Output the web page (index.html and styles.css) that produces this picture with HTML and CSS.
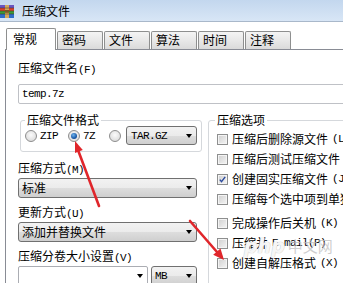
FILE: index.html
```html
<!DOCTYPE html>
<html lang="zh-CN">
<head>
    <meta charset="UTF-8">
    <meta name="viewport" content="width=device-width, initial-scale=1.0">
    <title>压缩文件</title>
    <link rel="stylesheet" href="styles.css">
</head>
<body>
    <div class="window">
        <div class="titlebar">
            <svg class="app-icon" viewBox="0 0 14 13">
                <rect x="0" y="0" width="14" height="3" fill="#6a55c0"/>
                <rect x="0" y="3" width="14" height="3" fill="#d8452c"/>
                <rect x="0" y="6" width="14" height="3" fill="#3d9a3a"/>
                <rect x="0" y="9" width="14" height="4" fill="#2f6ec8"/>
                <rect x="5" y="0" width="4" height="13" fill="#d2a85c"/>
                <rect x="5" y="5" width="4" height="3" fill="#8a6a2e"/>
                <line x1="0" y1="3" x2="14" y2="3" stroke="#3a2a1a" stroke-width="0.5"/>
                <line x1="0" y1="6" x2="14" y2="6" stroke="#3a2a1a" stroke-width="0.5"/>
                <line x1="0" y1="9" x2="14" y2="9" stroke="#3a2a1a" stroke-width="0.5"/>
            </svg>
            <span class="title">压缩文件</span>
        </div>

        <div class="dialog">
            <div class="tabs">
                <div class="tab active">常规</div>
                <div class="tab">密码</div>
                <div class="tab">文件</div>
                <div class="tab">算法</div>
                <div class="tab">时间</div>
                <div class="tab">注释</div>
            </div>

            <div class="panel">
                <div class="label">压缩文件名<span class="key">(F)</span></div>
                <div class="input mono">temp.7z</div>

                <div class="columns">
                    <div class="left">
                        <fieldset class="group format">
                            <legend>压缩文件格式</legend>
                            <div class="radios">
                                <label class="radio-item zip"><span class="radio"></span><span class="mono">ZIP</span></label>
                                <label class="radio-item sevenz"><span class="radio on"></span><span class="mono">7Z</span></label>
                                <label class="radio-item tar"><span class="radio"></span></label>
                                <div class="combo short"><span class="mono">TAR.GZ</span></div>
                            </div>
                        </fieldset>

                        <div class="label first">压缩方式<span class="key">(M)</span></div>
                        <div class="combo">标准</div>

                        <div class="label">更新方式<span class="key">(U)</span></div>
                        <div class="combo">添加并替换文件</div>

                        <div class="label">压缩分卷大小设置<span class="key">(V)</span></div>
                        <div class="combo-row">
                            <div class="combo edit"></div>
                            <div class="combo unit"><span class="mono">MB</span></div>
                        </div>
                    </div>

                    <fieldset class="group options">
                        <legend>压缩选项</legend>
                        <div class="check-row"><span class="box"></span>压缩后删除源文件 <span class="key">(L)</span></div>
                        <div class="check-row"><span class="box"></span>压缩后测试压缩文件</div>
                        <div class="check-row">
                            <span class="box">
                                <svg viewBox="0 0 11 11"><path d="M2.2 5.6 L4.3 8.2 L8.8 2.2" fill="none" stroke="#2b4a9e" stroke-width="1.7"/></svg>
                            </span>创建固实压缩文件 <span class="key">(J)</span>
                        </div>
                        <div class="check-row"><span class="box"></span>压缩每个选中项到单独压缩文件</div>
                        <div class="check-row gap"><span class="box"></span>完成操作后关机<span class="key">(K)</span></div>
                        <div class="check-row"><span class="box"></span>压缩并<span class="key">E-mail(P)</span></div>
                        <div class="check-row"><span class="box"></span>创建自解压格式<span class="key">(X)</span></div>
                    </fieldset>
                </div>
            </div>
        </div>

        <svg class="arrows" viewBox="0 0 343 283">
            <line x1="99" y1="206" x2="78" y2="150" stroke="#e0262b" stroke-width="2.6" stroke-linecap="round"/>
            <polygon points="75,141 82.8,150 75,153" fill="#e0262b"/>
            <line x1="190" y1="221" x2="217" y2="252" stroke="#e0262b" stroke-width="2.6" stroke-linecap="round"/>
            <polygon points="224,260 220.5,248.5 213.2,254.7" fill="#e0262b"/>
        </svg>

        <div class="watermark"><span class="php">php</span><span class="cn">中文网</span></div>
    </div>
</body>
</html>
```

FILE: styles.css
```css
body {
    margin: 0;
    width: 343px;
    height: 283px;
    overflow: hidden;
    background-color: #fff;
    font-family: "Noto Sans CJK SC", "Noto Sans", sans-serif;
    font-size: 12px;
    line-height: 16px;
    color: #000;
}
.window {
    position: relative;
    width: 420px;
    height: 283px;
}
.titlebar {
    display: flex;
    align-items: center;
    height: 21px;
    border-bottom: 1px solid #a9b8ca;
    background: linear-gradient(#c3d7ee, #d8e6f6);
}
.app-icon {
    width: 14px;
    height: 13px;
    margin-top: 2px;
}
.title {
    margin-left: 8px;
}
.dialog {
    padding: 6px 0 0 5px;
}
.tabs {
    display: flex;
    align-items: flex-end;
    height: 21px;
}
.tab {
    box-sizing: border-box;
    width: 46px;
    height: 18px;
    margin-left: 1px;
    padding-left: 4px;
    border: 1px solid #8e8f8f;
    border-bottom: none;
    border-radius: 2px 2px 0 0;
    background: linear-gradient(#f4f4f4, #e8e8e8 50%, #dadada);
    line-height: 16px;
}
.tab.active {
    position: relative;
    width: 50px;
    height: 22px;
    margin-bottom: -1px;
    padding-left: 6px;
    background: #fff;
    line-height: 20px;
}
.panel {
    height: 240px;
    padding: 10px 0 0 12px;
    border-top: 1px solid #898c95;
    border-left: 1px solid #898c95;
    background-color: #fff;
}
.label {
    white-space: nowrap;
    margin-top: 6px;
}
.panel > .label {
    margin-top: 0;
}
.label.first {
    margin-top: 8px;
}
.mono, .key {
    font-family: "Liberation Mono", monospace;
    font-size: 11px;
    letter-spacing: -0.6px;
}
.input {
    box-sizing: border-box;
    width: 340px;
    height: 20px;
    margin-top: 6px;
    padding-left: 3px;
    border: 1px solid #bfc1c6;
    border-radius: 2px;
    line-height: 18px;
}
.columns {
    display: flex;
    align-items: flex-start;
    margin-top: 10px;
}
.left {
    flex: none;
    width: 184px;
}
.group {
    box-sizing: border-box;
    min-width: 0;
    margin: 0;
    border: 1px solid #d5d8dc;
    border-radius: 3px;
}
.group legend {
    padding: 0 2px;
    line-height: 12px;
}
.format {
    width: 182px;
    margin-left: 2px;
    padding: 0 4px 6px 4px;
}
.radios {
    display: flex;
    align-items: center;
    height: 19px;
}
.radio-item {
    display: flex;
    align-items: center;
    gap: 3px;
}
.zip {
    margin-right: 10px;
}
.sevenz {
    margin-right: 14px;
}
.tar {
    margin-right: 5px;
}
.radio {
    display: flex;
    align-items: center;
    justify-content: center;
    box-sizing: border-box;
    width: 12px;
    height: 12px;
    border: 1px solid #8d8d8d;
    border-radius: 50%;
    background: radial-gradient(circle at 50% 40%, #fbfbfb, #d4d4d4);
}
.radio.on::after {
    content: "";
    width: 6px;
    height: 6px;
    border-radius: 50%;
    background: radial-gradient(circle at 40% 35%, #6fb4ee, #1a5aa8 60%, #0c3a78);
}
.combo {
    display: flex;
    align-items: center;
    justify-content: space-between;
    box-sizing: border-box;
    width: 179px;
    height: 20px;
    padding: 0 4px 0 3px;
    border: 1px solid #707070;
    border-radius: 3px;
    background: linear-gradient(#f2f2f2, #ebebeb 50%, #dddddd 51%, #cfcfcf);
    white-space: nowrap;
}
.combo::after {
    content: "";
    border-left: 3.5px solid transparent;
    border-right: 3.5px solid transparent;
    border-top: 4px solid #000;
}
.combo.short {
    width: 71px;
    height: 19px;
    padding-left: 4px;
}
.combo-row {
    display: flex;
}
.combo.edit {
    width: 130px;
    justify-content: flex-end;
    border-color: #abadb3;
    border-radius: 2px;
    background: #fff;
}
.combo.unit {
    width: 46px;
    margin-left: 3px;
}
.options {
    flex: none;
    width: 200px;
    height: 200px;
    margin-left: 6px;
    padding: 3px 0 0 8px;
}
.options legend {
    margin-left: -2px;
}
.check-row {
    display: flex;
    align-items: center;
    gap: 4px;
    height: 20px;
    white-space: nowrap;
}
.check-row.gap {
    margin-top: 4px;
}
.box {
    flex: none;
    box-sizing: border-box;
    width: 11px;
    height: 11px;
    border: 1px solid #8e8f8f;
    box-shadow: inset 0 0 0 1px #f4f4f4;
    background: linear-gradient(135deg, #cfcfcf, #f5f5f5);
}
.box svg {
    display: block;
    width: 9px;
    height: 9px;
}
.arrows {
    position: absolute;
    top: 0;
    left: 0;
    width: 343px;
    height: 283px;
    pointer-events: none;
}
.watermark {
    position: absolute;
    top: 238px;
    left: 244px;
    display: flex;
    align-items: center;
    gap: 3px;
    pointer-events: none;
}
.php {
    font-family: "DejaVu Sans", sans-serif;
    font-size: 19px;
    font-style: italic;
    font-weight: bold;
    color: rgba(255, 255, 255, 0.85);
    text-shadow: 0 0 1px #c9c9c9, 0 0 1px #c9c9c9;
}
.cn {
    font-size: 15px;
    color: rgba(190, 190, 190, 0.75);
}
```
